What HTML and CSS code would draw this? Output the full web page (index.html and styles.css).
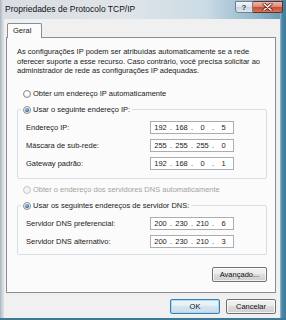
FILE: index.html
```html
<!DOCTYPE html>
<html lang="pt">
<head>
  <meta charset="UTF-8" />
  <title>Propriedades de Protocolo TCP/IP</title>
  <link rel="stylesheet" href="styles.css">
</head>
<body>
  <div class="window">
    <div class="titlebar">
      <span class="title">Propriedades de Protocolo TCP/IP</span>
      <div class="caption">
        <span class="cap-help">?</span>
        <span class="cap-close">
          <svg width="11" height="8" viewBox="0 0 11 8">
            <path d="M2 1 L9 7 M9 1 L2 7" stroke="#5a1e14" stroke-width="3" stroke-linecap="round"/>
            <path d="M2 1 L9 7 M9 1 L2 7" stroke="#ffffff" stroke-width="1.6" stroke-linecap="round"/>
          </svg>
        </span>
      </div>
    </div>

    <div class="client">
      <div class="tabs">
        <div class="tab">Geral</div>
      </div>

      <div class="panel">
        <p class="intro">
          As configurações IP podem ser atribuídas automaticamente se a rede
          oferecer suporte a esse recurso. Caso contrário, você precisa solicitar ao
          administrador de rede as configurações IP adequadas.
        </p>

        <div class="radio first"><span class="rb"></span>Obter um endereço IP automaticamente</div>

        <fieldset class="group ip-group">
          <legend><span class="radio in-legend"><span class="rb on"></span>Usar o seguinte endereço IP:</span></legend>
          <div class="row">
            <span class="label">Endereço IP:</span>
            <div class="ip"><span class="oct">192</span><span class="sep">.</span><span class="oct">168</span><span class="sep">.</span><span class="oct">0</span><span class="sep">.</span><span class="oct">5</span></div>
          </div>
          <div class="row">
            <span class="label">Máscara de sub-rede:</span>
            <div class="ip"><span class="oct">255</span><span class="sep">.</span><span class="oct">255</span><span class="sep">.</span><span class="oct">255</span><span class="sep">.</span><span class="oct">0</span></div>
          </div>
          <div class="row">
            <span class="label">Gateway padrão:</span>
            <div class="ip"><span class="oct">192</span><span class="sep">.</span><span class="oct">168</span><span class="sep">.</span><span class="oct">0</span><span class="sep">.</span><span class="oct">1</span></div>
          </div>
        </fieldset>

        <div class="radio disabled"><span class="rb"></span>Obter o endereço dos servidores DNS automaticamente</div>

        <fieldset class="group dns-group">
          <legend><span class="radio in-legend"><span class="rb on"></span>Usar os seguintes endereços de servidor DNS:</span></legend>
          <div class="row">
            <span class="label">Servidor DNS preferencial:</span>
            <div class="ip"><span class="oct">200</span><span class="sep">.</span><span class="oct">230</span><span class="sep">.</span><span class="oct">210</span><span class="sep">.</span><span class="oct">6</span></div>
          </div>
          <div class="row">
            <span class="label">Servidor DNS alternativo:</span>
            <div class="ip"><span class="oct">200</span><span class="sep">.</span><span class="oct">230</span><span class="sep">.</span><span class="oct">210</span><span class="sep">.</span><span class="oct">3</span></div>
          </div>
        </fieldset>

        <div class="adv-row">
          <button class="btn adv">Avançado...</button>
        </div>
      </div>

      <div class="footer">
        <button class="btn default">OK</button>
        <button class="btn">Cancelar</button>
      </div>
    </div>
  </div>
</body>
</html>
```

FILE: styles.css
```css
* {
  box-sizing: border-box;
}

body {
  margin: 0;
  font-family: "Liberation Sans", Arial, sans-serif;
  font-size: 7.5px;
  color: #1a1a1a;
}

.window {
  width: 286px;
  height: 320px;
  display: flex;
  flex-direction: column;
  padding: 0 6px 2px 4px;
  background:
    linear-gradient(#3d7a97, #3d7a97) left bottom / 100% 2px no-repeat,
    linear-gradient(to right, #9cc0d3 0, #4a86a3 2px, #3f7d9a 100%) right top / 6px 100% no-repeat,
    linear-gradient(to right, #aab5bf 0, #d9dee3 3px, #dfe4e9 45%, #cbdbe5 72%, #8fb5ca 90%, #5e95b2 100%);
}

/* title bar */
.titlebar {
  height: 19px;
  display: flex;
  align-items: center;
  margin-right: -6px;
  padding: 0 3px 0 1px;
}

.title {
  font-size: 8.5px;
  color: #111;
  padding-bottom: 1px;
}

.caption {
  margin-left: auto;
  align-self: flex-start;
  margin-top: 1px;
  display: flex;
}

.cap-help {
  width: 18px;
  height: 12px;
  border: 1px solid #6f7f8d;
  border-bottom-left-radius: 3px;
  background: linear-gradient(#f3f6f9 0%, #dfe6ec 48%, #c9d4dd 52%, #dfe8ee 100%);
  color: #34424f;
  font-size: 8px;
  font-weight: bold;
  display: flex;
  align-items: center;
  justify-content: center;
}

.cap-close {
  width: 30px;
  height: 12px;
  border: 1px solid #6b2b20;
  border-left: none;
  border-bottom-right-radius: 3px;
  background: linear-gradient(#ecb8ab 0%, #dc8a76 45%, #c64a30 52%, #d9745a 100%);
  display: flex;
  align-items: center;
  justify-content: center;
}

/* client area */
.client {
  flex: 1;
  background: #f0f0f0;
  display: flex;
  flex-direction: column;
  padding: 0 4px 0 2px;
}

.tabs {
  display: flex;
  padding: 4px 0 0 1px;
}

.tab {
  position: relative;
  z-index: 1;
  height: 15px;
  margin-bottom: -1px;
  padding: 0 10px 0 5px;
  line-height: 13px;
  border: 1px solid #898c95;
  border-bottom: none;
  border-radius: 2px 2px 0 0;
  background: #fcfcfc;
}

.panel {
  height: 256px;
  border: 1px solid #898c95;
  background: #fbfbfb;
  padding: 9px 8px 0 10px;
  display: flex;
  flex-direction: column;
}

.intro {
  margin: 0;
  line-height: 9.5px;
}

/* radios */
.radio {
  display: flex;
  align-items: center;
  gap: 2px;
  height: 10px;
  line-height: 10px;
  padding-left: 6px;
  white-space: nowrap;
}

.radio.first {
  margin-top: 13px;
}

.radio.in-legend {
  padding-left: 0;
}

.radio.disabled {
  margin-top: 6px;
  color: #a3a3a3;
}

.rb {
  flex: none;
  width: 8px;
  height: 8px;
  border-radius: 50%;
  border: 1px solid #8c8c8c;
  background: radial-gradient(circle at 50% 40%, #ffffff 30%, #dcdcdc 100%);
  display: flex;
  align-items: center;
  justify-content: center;
}

.rb.on::after {
  content: "";
  width: 4px;
  height: 4px;
  border-radius: 50%;
  background: radial-gradient(circle at 40% 35%, #9ccbee 0%, #2a6aa3 60%, #17497c 100%);
}

.radio.disabled .rb {
  border-color: #c6c6c6;
  background: #f4f4f4;
}

/* group boxes */
.group {
  margin: 6px 0 0 0;
  padding: 4px 8px 5px 8px;
  border: 1px solid #d5dfe5;
  border-radius: 2px;
  min-width: 0;
}

.group legend {
  padding: 0 2px;
  margin-left: -5px;
}

.dns-group {
  padding-bottom: 3px;
}

.row {
  display: flex;
  align-items: center;
  height: 18px;
}

.label {
  width: 124px;
}

.ip {
  width: 84px;
  height: 13px;
  border: 1px solid #abadb3;
  background: #fff;
  display: flex;
  align-items: center;
  justify-content: center;
  color: #222;
}

.oct {
  width: 17px;
  text-align: center;
}

.sep {
  width: 4px;
  text-align: center;
}

/* buttons */
.adv-row {
  display: flex;
  justify-content: flex-end;
  margin-top: 12px;
}

.btn {
  width: 50px;
  height: 15px;
  padding: 0;
  font-family: inherit;
  font-size: 7.5px;
  color: #111;
  border: 1px solid #707070;
  border-radius: 2px;
  background: linear-gradient(#f3f3f3 0%, #ebebeb 45%, #dddddd 50%, #cfcfcf 100%);
  box-shadow: inset 0 0 0 1px rgba(255, 255, 255, 0.7);
}

.btn.adv {
  width: 55px;
}

.btn.default {
  border-color: #3c7fb1;
  background: linear-gradient(#eef6fb 0%, #e4eff6 45%, #d5e5f0 50%, #c8dcea 100%);
  box-shadow: inset 0 0 0 1px #a9d9f4;
}

.footer {
  display: flex;
  justify-content: flex-end;
  gap: 6px;
  padding-top: 6px;
}
```
